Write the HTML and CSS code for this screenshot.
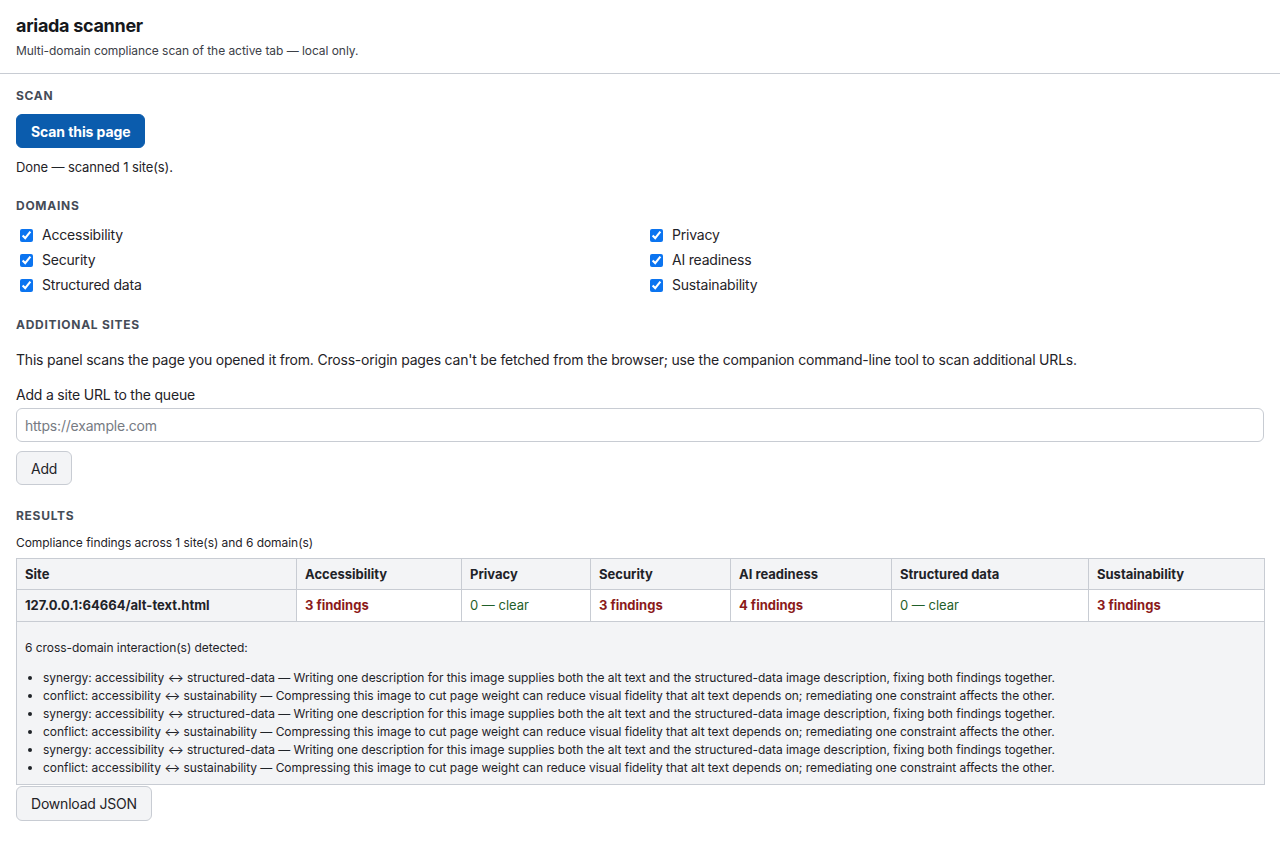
FILE: index.html
```html
<!DOCTYPE html>
<html lang="en">
<head>
  <meta charset="UTF-8">
  <meta name="viewport" content="width=device-width, initial-scale=1.0">
  <title>ariada scanner</title>
  <link rel="stylesheet" href="styles.css">
</head>
<body>
  <header class="top">
    <h1>ariada scanner</h1>
    <p class="sub">Multi-domain compliance scan of the active tab — local only.</p>
  </header>

  <main class="panel">
    <section>
      <h2 class="first">Scan</h2>
      <button class="btn primary">Scan this page</button>
      <p class="status">Done — scanned 1 site(s).</p>
    </section>

    <section>
      <h2>Domains</h2>
      <div class="domains">
        <label class="check"><input type="checkbox" checked> Accessibility</label>
        <label class="check"><input type="checkbox" checked> Privacy</label>
        <label class="check"><input type="checkbox" checked> Security</label>
        <label class="check"><input type="checkbox" checked> AI readiness</label>
        <label class="check"><input type="checkbox" checked> Structured data</label>
        <label class="check"><input type="checkbox" checked> Sustainability</label>
      </div>
    </section>

    <section>
      <h2>Additional sites</h2>
      <p class="note">This panel scans the page you opened it from. Cross-origin pages can't be fetched from the browser; use the companion command-line tool to scan additional URLs.</p>
      <label class="field-label" for="url">Add a site URL to the queue</label>
      <input id="url" class="url" type="text" placeholder="https://example.com">
      <button class="btn">Add</button>
    </section>

    <section>
      <h2 class="results-title">Results</h2>
      <p class="caption">Compliance findings across 1 site(s) and 6 domain(s)</p>
      <table class="results">
        <colgroup>
          <col class="c-site"><col class="c-acc"><col class="c-priv"><col class="c-sec">
          <col class="c-ai"><col class="c-struct"><col class="c-sus">
        </colgroup>
        <thead>
          <tr>
            <th>Site</th>
            <th>Accessibility</th>
            <th>Privacy</th>
            <th>Security</th>
            <th>AI readiness</th>
            <th>Structured data</th>
            <th>Sustainability</th>
          </tr>
        </thead>
        <tbody>
          <tr>
            <th class="site">127.0.0.1:64664/alt-text.html</th>
            <td class="bad">3 findings</td>
            <td class="ok">0 — clear</td>
            <td class="bad">3 findings</td>
            <td class="bad">4 findings</td>
            <td class="ok">0 — clear</td>
            <td class="bad">3 findings</td>
          </tr>
          <tr>
            <td class="interactions" colspan="7">
              <p>6 cross-domain interaction(s) detected:</p>
              <ul>
                <li>synergy: accessibility ↔ structured-data — Writing one description for this image supplies both the alt text and the structured-data image description, fixing both findings together.</li>
                <li>conflict: accessibility ↔ sustainability — Compressing this image to cut page weight can reduce visual fidelity that alt text depends on; remediating one constraint affects the other.</li>
                <li>synergy: accessibility ↔ structured-data — Writing one description for this image supplies both the alt text and the structured-data image description, fixing both findings together.</li>
                <li>conflict: accessibility ↔ sustainability — Compressing this image to cut page weight can reduce visual fidelity that alt text depends on; remediating one constraint affects the other.</li>
                <li>synergy: accessibility ↔ structured-data — Writing one description for this image supplies both the alt text and the structured-data image description, fixing both findings together.</li>
                <li>conflict: accessibility ↔ sustainability — Compressing this image to cut page weight can reduce visual fidelity that alt text depends on; remediating one constraint affects the other.</li>
              </ul>
            </td>
          </tr>
        </tbody>
      </table>
      <button class="btn download">Download JSON</button>
    </section>
  </main>
</body>
</html>
```

FILE: styles.css
```css
body {
  margin: 0;
  font-family: Inter, "Liberation Sans", sans-serif;
  color: #1f2328;
  background: #ffffff;
}
.top {
  padding: 14px 16px 15px;
  border-bottom: 1px solid #c8ccd3;
}
h1 {
  margin: 0;
  font-size: 18px;
  line-height: 23px;
  font-weight: 700;
  letter-spacing: -0.3px;
  color: #16181c;
}
.sub {
  margin: 6px 0 0;
  font-size: 12px;
  line-height: 15px;
  letter-spacing: -0.05px;
  color: #3c4047;
}
.panel {
  padding: 0 16px 40px;
}
h2 {
  margin: 22px 0 12px;
  font-size: 12px;
  line-height: 15px;
  font-weight: 700;
  letter-spacing: 0.06em;
  text-transform: uppercase;
  color: #454c57;
}
h2.first {
  margin-top: 14px;
  margin-bottom: 11px;
}
h2.results-title {
  margin-top: 23px;
}
.btn {
  display: block;
  height: 34px;
  padding: 0 14px;
  font-family: inherit;
  font-size: 14px;
  letter-spacing: -0.2px;
  color: #1f2328;
  background: #f3f4f6;
  border: 1px solid #c8ccd3;
  border-radius: 6px;
}
.btn.primary {
  padding: 0 14px;
  background: #0b5cad;
  border-color: #0b5cad;
  color: #ffffff;
  font-weight: 700;
  letter-spacing: -0.1px;
}
.btn.download {
  height: 35px;
  margin-top: 1px;
}
.status {
  margin: 11px 0 0;
  padding-bottom: 1px;
  font-size: 13px;
  line-height: 16px;
  letter-spacing: -0.12px;
}
.domains {
  display: grid;
  grid-template-columns: 1fr 1fr;
  column-gap: 12px;
  row-gap: 5px;
}
.check {
  display: flex;
  align-items: center;
  gap: 6px;
  font-size: 14px;
  line-height: 20px;
  letter-spacing: -0.2px;
}
.check input {
  margin: 0 3px 0 4px;
  width: 13px;
  height: 13px;
  accent-color: #0b74f0;
}
.note {
  margin: 18px 0 0;
  font-size: 14px;
  line-height: 20px;
  letter-spacing: -0.2px;
}
.field-label {
  display: block;
  margin-top: 15px;
  font-size: 14px;
  line-height: 20px;
  letter-spacing: -0.2px;
}
.url {
  display: block;
  box-sizing: border-box;
  width: 100%;
  height: 34px;
  margin: 3px 0 9px;
  padding: 0 8px;
  font-family: inherit;
  font-size: 14px;
  letter-spacing: -0.2px;
  border: 1px solid #c8ccd3;
  border-radius: 6px;
}
.url::placeholder {
  color: #767b83;
}
.caption {
  margin: 0 0 8px;
  font-size: 12px;
  line-height: 15px;
  letter-spacing: -0.05px;
}
.results {
  width: 100%;
  border-collapse: collapse;
  table-layout: fixed;
  font-size: 13px;
  line-height: 15px;
}
.c-site { width: 280px; }
.c-acc { width: 165px; }
.c-priv { width: 129px; }
.c-sec { width: 140px; }
.c-ai { width: 161px; }
.c-struct { width: 197px; }
.c-sus { width: 176px; }
.results th,
.results td {
  border: 1px solid #c8ccd3;
  padding: 8px;
  text-align: left;
  vertical-align: top;
}
.results thead th {
  padding: 8px 8px 7px;
}
.results th {
  background: #f3f4f6;
  font-weight: 700;
}
.results td {
  background: #ffffff;
}
.results .bad {
  color: #8b1a1a;
  font-weight: 700;
}
.results .ok {
  color: #1f5f2a;
}
.results .interactions {
  padding: 8px 8px 7px;
  background: #f3f4f6;
  font-size: 12px;
  letter-spacing: -0.05px;
}
.interactions p {
  margin: 10px 0 14px;
  line-height: 15px;
}
.interactions ul {
  margin: 0;
  padding-left: 18px;
}
.interactions li {
  line-height: 18px;
}
```
